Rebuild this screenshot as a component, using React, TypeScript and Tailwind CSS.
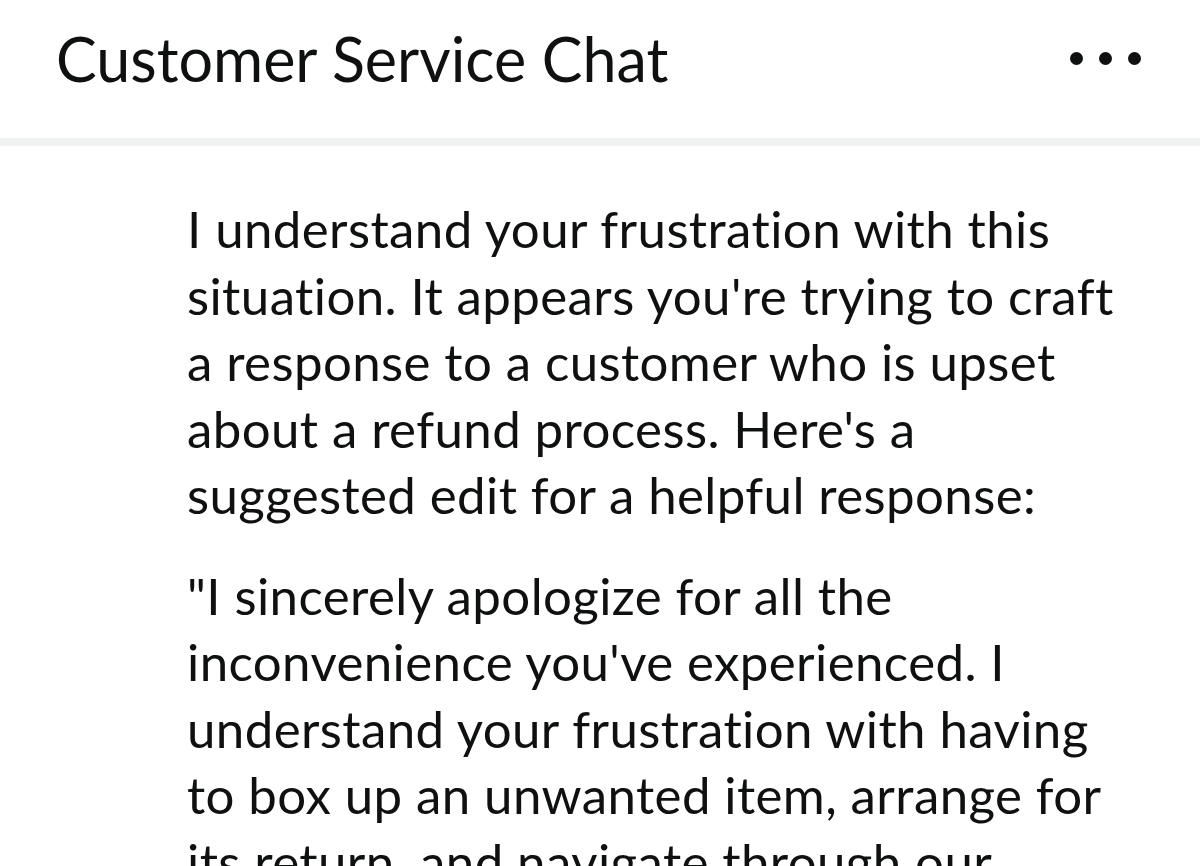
import React from 'react';

const paragraphs: string[][] = [
  [
    'I understand your frustration with this',
    "situation. It appears you're trying to craft",
    'a response to a customer who is upset',
    "about a refund process. Here's a",
    'suggested edit for a helpful response:',
  ],
  [
    '"I sincerely apologize for all the',
    "inconvenience you've experienced. I",
    'understand your frustration with having',
    'to box up an unwanted item, arrange for',
    'its return, and navigate through our',
  ],
];

const App = () => {
  return (
    <div className="h-screen overflow-hidden bg-white text-[#0f1111] font-['Lato',sans-serif] [font-variant-ligatures:none]">
      <header className="h-[138px] pb-[22px] pl-[56px] pr-[59px] flex items-center justify-between">
        <h1 className="text-[61px] leading-none font-normal">Customer Service Chat</h1>
        <button className="flex items-center gap-[16px]" aria-label="More options">
          <span className="w-[13px] h-[13px] rounded-full bg-[#0f1111]"></span>
          <span className="w-[13px] h-[13px] rounded-full bg-[#0f1111]"></span>
          <span className="w-[13px] h-[13px] rounded-full bg-[#0f1111]"></span>
        </button>
      </header>
      <div className="h-[8px] bg-[#f0f2f2]"></div>
      <main className="pl-[187px] pt-[50px]">
        {paragraphs.map((lines, i) => (
          <p key={i} className="mb-[34px] text-[51px] leading-[66.5px] tracking-[0.4px]">
            {lines.map(line => (
              <span key={line} className="block whitespace-nowrap">
                {line}
              </span>
            ))}
          </p>
        ))}
      </main>
    </div>
  );
};

export default App;
